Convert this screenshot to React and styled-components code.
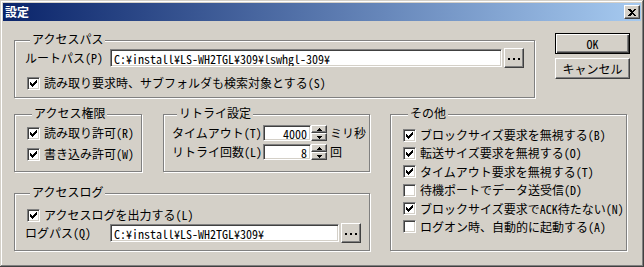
import styled, { createGlobalStyle } from "styled-components";

const GlobalStyle = createGlobalStyle`
  * { box-sizing: border-box; }
  html, body { margin: 0; padding: 0; background: #d4d0c8; }
  body {
    font-family: "Noto Sans CJK JP", "Noto Sans", sans-serif;
    font-size: 12px;
    line-height: 14px;
    color: #000;
    font-feature-settings: "hwid" 1;
  }
`;

const raised = `
  background: #d4d0c8;
  border: 1px solid;
  border-color: #fff #404040 #404040 #fff;
  box-shadow: inset -1px -1px #808080;
`;

const sunken = `
  border: 1px solid;
  border-color: #808080 #fff #fff #808080;
  box-shadow: inset 1px 1px #404040, inset -1px -1px #d4d0c8;
`;

const Window = styled.div`
  width: 644px;
  height: 267px;
  padding: 3px;
  background: #d4d0c8;
  box-shadow: inset -1px -1px #404040, inset 1px 1px #d4d0c8,
    inset -2px -2px #808080, inset 2px 2px #fff;
  display: flex;
  flex-direction: column;
`;

const TitleBar = styled.div`
  height: 18px;
  display: flex;
  align-items: center;
  justify-content: space-between;
  padding: 0 1px 0 2px;
  background: linear-gradient(to right, #0a246a, #a6caf0);
`;

const Title = styled.span`
  color: #fff;
  font-weight: bold;
`;

const CloseButton = styled.div`
  width: 16px;
  height: 14px;
  ${raised}
  display: flex;
  align-items: center;
  justify-content: center;
`;

const Body = styled.div`
  padding: 12px 0 0 11px;
`;

const TopRow = styled.div`
  display: flex;
  align-items: flex-start;
`;

const BottomRow = styled.div`
  display: flex;
  align-items: flex-start;
  margin-top: 16px;
`;

const LeftColumn = styled.div`
  width: 356px;
  display: flex;
  flex-direction: column;
  gap: 21px;
`;

const GroupPair = styled.div`
  display: flex;
  gap: 21px;
`;

const Group = styled.div`
  width: ${p => p.$w}px;
  height: ${p => p.$h}px;
  margin-top: ${p => p.$mt || 0}px;
  margin-left: ${p => p.$ml || 0}px;
  padding-left: ${p => p.$pl || 0}px;
  border: 1px solid #808080;
  box-shadow: inset 1px 1px #fff, 1px 1px #fff;
`;

const Legend = styled.div`
  width: fit-content;
  height: 14px;
  margin: -9px 0 0 ${p => p.$ml || 5}px;
  padding: 0 2px;
  background: #d4d0c8;
  white-space: nowrap;
`;

const Row = styled.div`
  display: flex;
  align-items: center;
  height: ${p => p.$h || 16}px;
  margin-top: ${p => p.$mt || 0}px;
  white-space: nowrap;
`;

const Label = styled.span`
  width: ${p => p.$w}px;
  flex: none;
`;

const TextBox = styled.div`
  width: ${p => p.$w}px;
  height: 18px;
  ${sunken}
  background: #fff;
  padding: 2px 3px 0;
  overflow: hidden;
  white-space: nowrap;
`;

const BrowseButton = styled.div`
  width: 20px;
  height: 20px;
  margin-left: 2px;
  ${raised}
  display: flex;
  align-items: center;
  justify-content: center;
  padding-top: 2px;
`;

const CheckList = styled.div`
  display: flex;
  flex-direction: column;
  justify-content: ${p => p.$spread ? "space-between" : "flex-start"};
  gap: ${p => p.$gap || 0}px;
  height: ${p => p.$h ? `${p.$h}px` : "auto"};
  margin-top: ${p => p.$mt || 0}px;
`;

const CheckRow = styled.div`
  display: flex;
  align-items: center;
  gap: 4px;
  height: 16px;
  white-space: nowrap;
  padding-left: ${p => p.$pl || 0}px;
`;

const Box = styled.span`
  width: 13px;
  height: 13px;
  flex: none;
  background: #fff;
  ${sunken}
  display: block;
  position: relative;
  svg { display: block; margin: -1px; }
`;

const SpinInput = styled.div`
  width: 48px;
  height: 16px;
  ${sunken}
  background: #fff;
  text-align: right;
  padding: 1px 3px 0 0;
`;

const Spinner = styled.div`
  width: 16px;
  height: 16px;
  display: flex;
  flex-direction: column;
`;

const SpinButton = styled.div`
  height: 8px;
  ${raised}
  display: flex;
  align-items: center;
  justify-content: center;
`;

const Unit = styled.span`
  margin-left: 3px;
`;

const ButtonColumn = styled.div`
  margin-left: 20px;
  display: flex;
  flex-direction: column;
  gap: 4px;
`;

const PushButton = styled.div`
  width: 75px;
  height: 21px;
  display: flex;
  align-items: center;
  justify-content: center;
  ${raised}
  ${p => p.$default && `
    border: 1px solid #000;
    box-shadow: inset 1px 1px #fff, inset -1px -1px #404040, inset -2px -2px #808080;
  `}
`;

function CheckMark() {
  const cols = [2, 3, 4, 3, 2, 1, 0];
  const d = cols.map((s, i) => `M${3 + i} ${3 + s}h1v3h-1z`).join("");
  return (
    <svg width="13" height="13" viewBox="0 0 13 13" shapeRendering="crispEdges">
      <path d={d} fill="#000" />
    </svg>
  );
}

function Check({ checked, children, pl }) {
  return (
    <CheckRow $pl={pl}>
      <Box>{checked && <CheckMark />}</Box>
      <span>{children}</span>
    </CheckRow>
  );
}

function Dots() {
  return (
    <svg width="14" height="4" viewBox="0 0 14 4" shapeRendering="crispEdges">
      <rect x="1" y="1" width="2" height="2" fill="#000" />
      <rect x="6" y="1" width="2" height="2" fill="#000" />
      <rect x="11" y="1" width="2" height="2" fill="#000" />
    </svg>
  );
}

function Arrow({ up }) {
  return (
    <svg width="5" height="3" viewBox="0 0 5 3" shapeRendering="crispEdges">
      <path d={up ? "M2 0h1v1h1v1h1v1H0V2h1V1h1z" : "M0 0h5v1H4v1H3v1H2V2H1V1H0z"} fill="#000" />
    </svg>
  );
}

function Spin({ value, unit }) {
  return (
    <>
      <SpinInput>{value}</SpinInput>
      <Spinner>
        <SpinButton><Arrow up /></SpinButton>
        <SpinButton><Arrow /></SpinButton>
      </Spinner>
      <Unit>{unit}</Unit>
    </>
  );
}

const others = [
  ["ブロックサイズ要求を無視する(B)", true],
  ["転送サイズ要求を無視する(O)", true],
  ["タイムアウト要求を無視する(T)", true],
  ["待機ポートでデータ送受信(D)", false],
  ["ブロックサイズ要求でACK待たない(N)", true],
  ["ログオン時、自動的に起動する(A)", false],
];

export default function App() {
  return (
    <>
      <GlobalStyle />
      <Window>
        <TitleBar>
          <Title>設定</Title>
          <CloseButton>
            <svg width="8" height="7" viewBox="0 0 8 7" shapeRendering="crispEdges">
              <path d="M0 0h2l2 2 2-2h2L5 3.5 8 7H6L4 5 2 7H0l3-3.5z" fill="#000" />
            </svg>
          </CloseButton>
        </TitleBar>
        <Body>
          <TopRow>
            <Group $w={521} $h={58} $mt={7} $pl={10}>
              <Legend>アクセスパス</Legend>
              <Row $h={20} $mt={2}>
                <Label $w={85}>ルートパス(P)</Label>
                <TextBox $w={392}>C:¥install¥LS-WH2TGL¥309¥lswhgl-309¥</TextBox>
                <BrowseButton><Dots /></BrowseButton>
              </Row>
              <Row $mt={7}>
                <Check checked pl={2}>読み取り要求時、サブフォルダも検索対象とする(S)</Check>
              </Row>
            </Group>
            <ButtonColumn>
              <PushButton $default>OK</PushButton>
              <PushButton>キャンセル</PushButton>
            </ButtonColumn>
          </TopRow>
          <BottomRow>
            <LeftColumn>
              <GroupPair>
                <Group $w={128} $h={58} $pl={12}>
                  <Legend>アクセス権限</Legend>
                  <CheckList $mt={5} $gap={5}>
                    <Check checked>読み取り許可(R)</Check>
                    <Check checked>書き込み許可(W)</Check>
                  </CheckList>
                </Group>
                <Group $w={207} $h={58} $pl={8}>
                  <Legend $ml={0}>リトライ設定</Legend>
                  <Row $mt={5}>
                    <Label $w={91}>タイムアウト(T)</Label>
                    <Spin value="4000" unit="ミリ秒" />
                  </Row>
                  <Row $mt={3}>
                    <Label $w={91}>リトライ回数(L)</Label>
                    <Spin value="8" unit="回" />
                  </Row>
                </Group>
              </GroupPair>
              <Group $w={356} $h={58} $pl={10}>
                <Legend>アクセスログ</Legend>
                <Row $mt={8}>
                  <Check checked pl={2}>アクセスログを出力する(L)</Check>
                </Row>
                <Row $h={20}>
                  <Label $w={85}>ログパス(Q)</Label>
                  <TextBox $w={229}>C:¥install¥LS-WH2TGL¥309¥</TextBox>
                  <BrowseButton><Dots /></BrowseButton>
                </Row>
              </Group>
            </LeftColumn>
            <Group $w={237} $h={137} $ml={20} $pl={12}>
              <Legend>その他</Legend>
              <CheckList $mt={7} $h={108} $spread>
                {others.map(([text, checked]) => (
                  <Check key={text} checked={checked}>{text}</Check>
                ))}
              </CheckList>
            </Group>
          </BottomRow>
        </Body>
      </Window>
    </>
  );
}
